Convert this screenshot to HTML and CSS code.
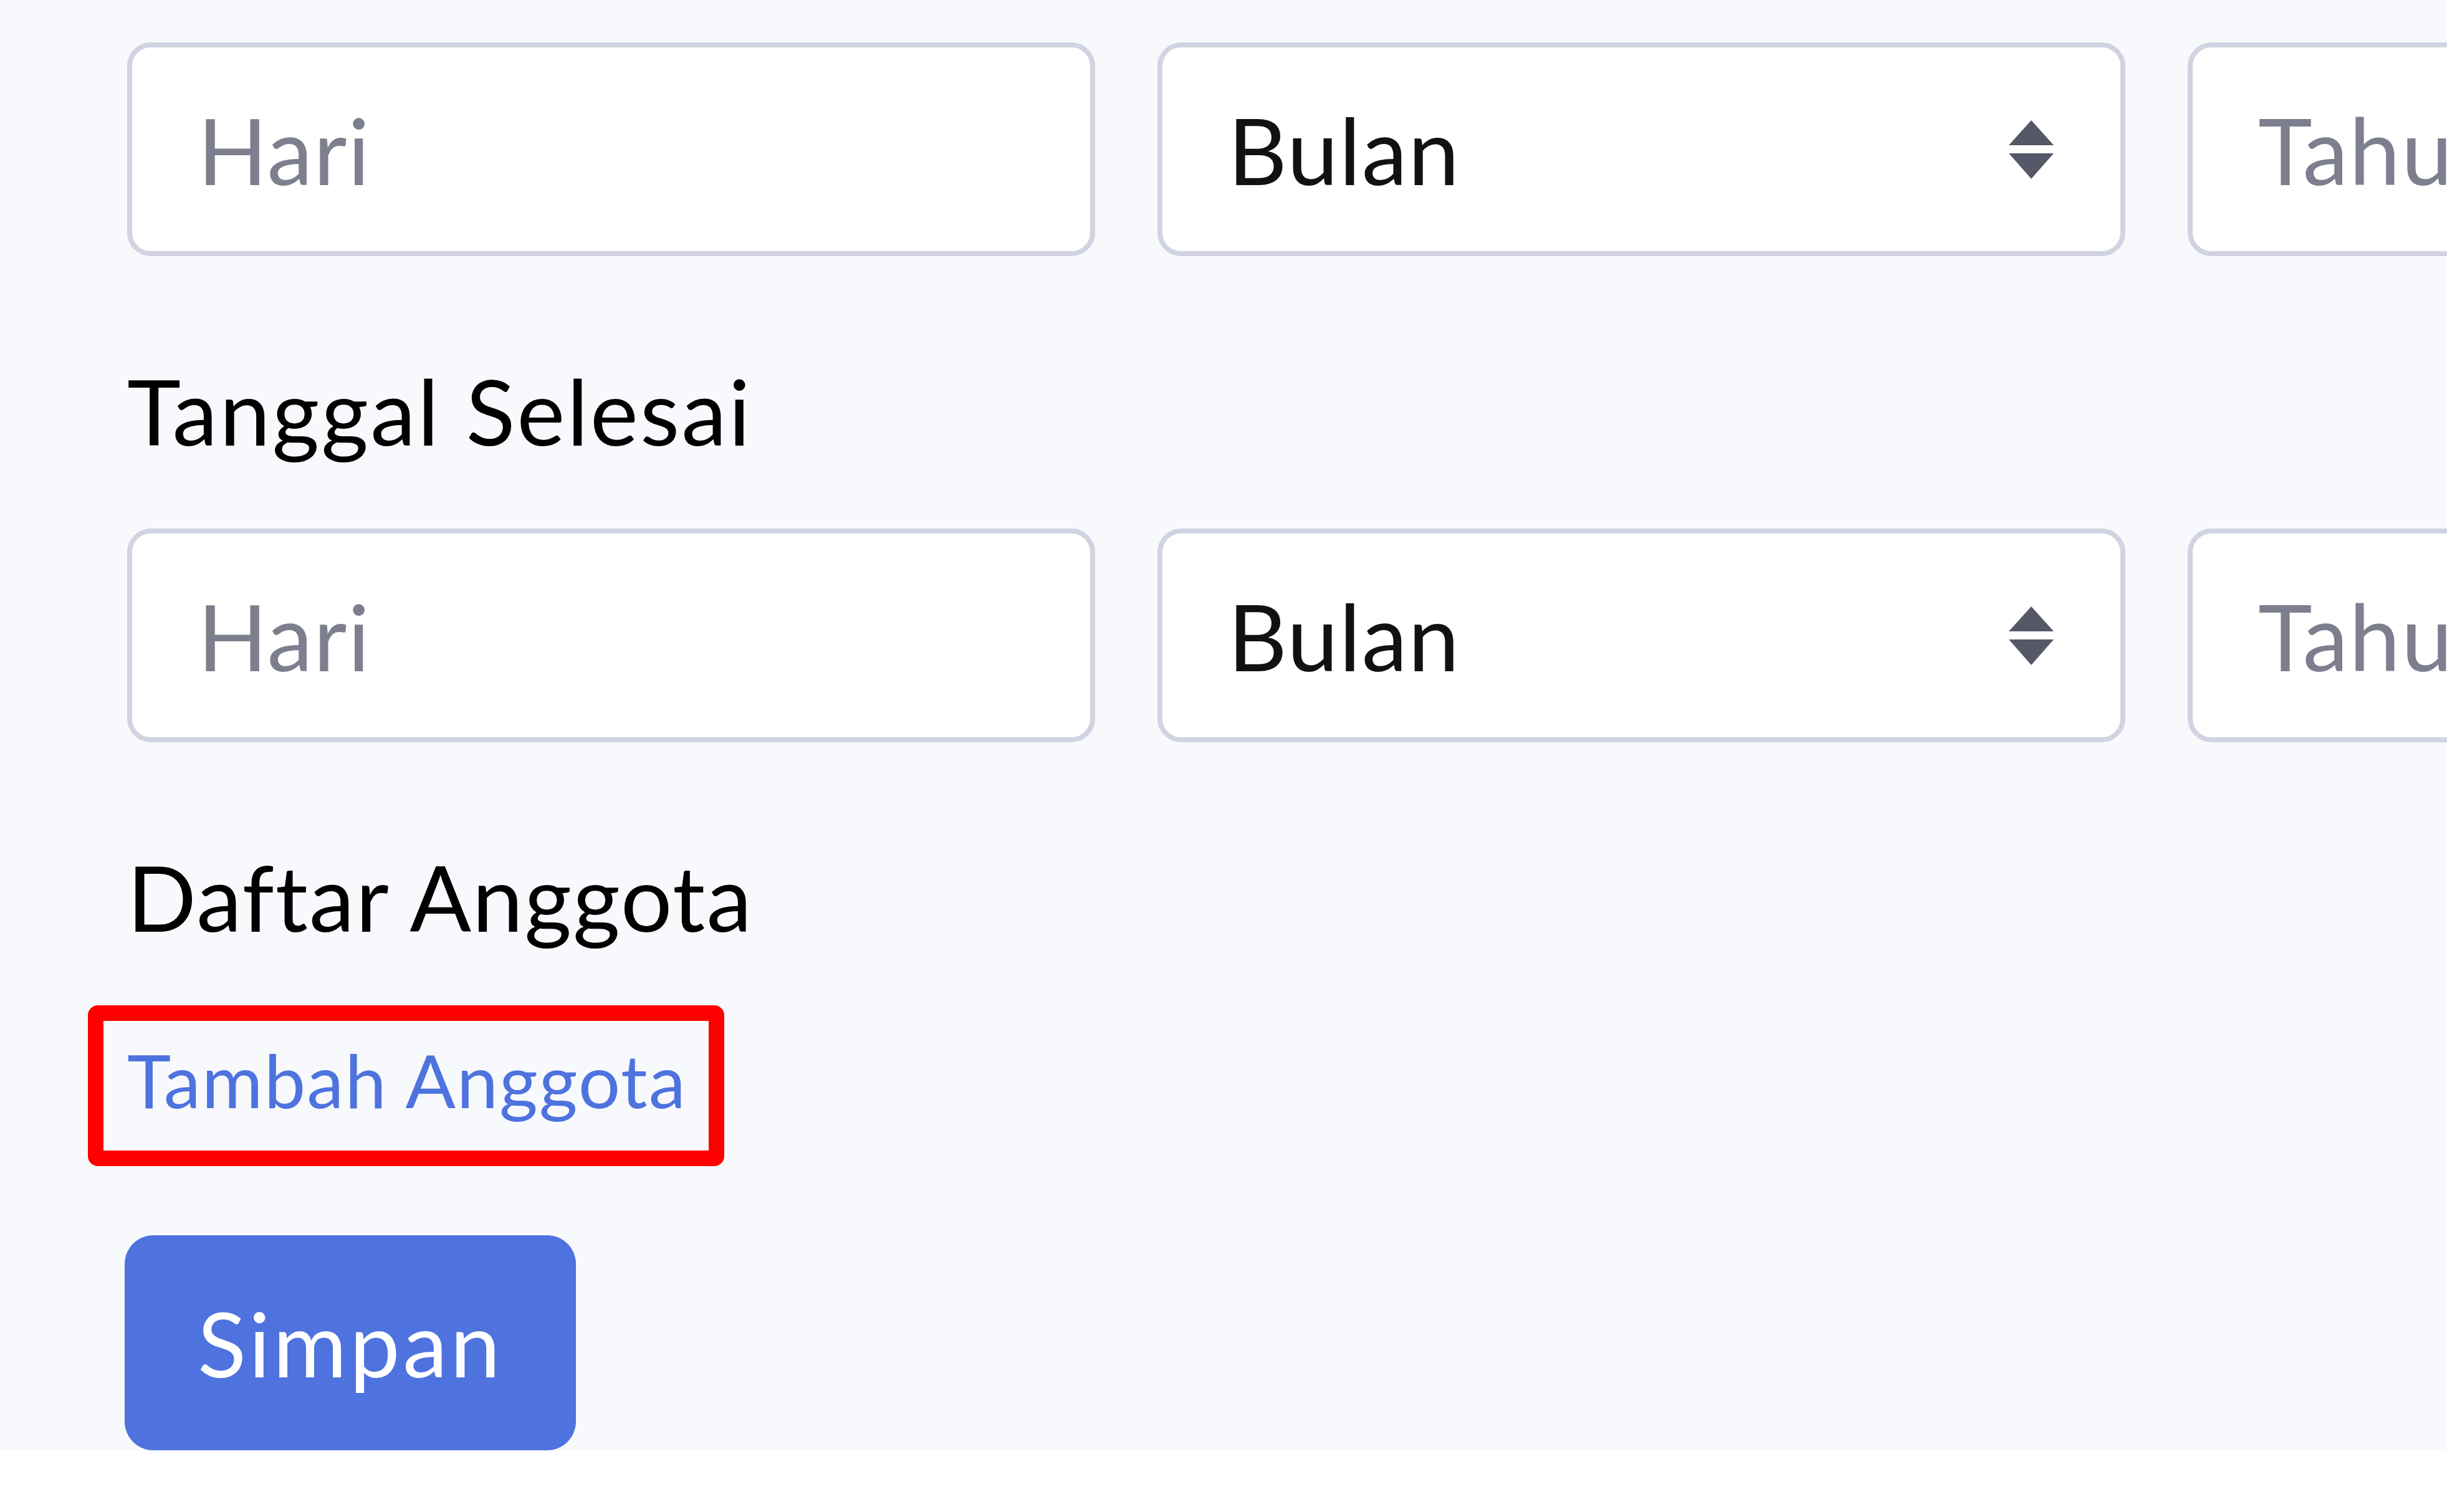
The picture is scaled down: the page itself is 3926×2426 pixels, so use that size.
FILE: index.html
```html
<!DOCTYPE html>
<html lang="id">
<head>
<meta charset="utf-8">
<title>Form Anggota</title>
<link rel="stylesheet" href="styles.css">
</head>
<body>
<main class="form-area">
  <div class="date-row">
    <input class="field" type="text" placeholder="Hari">
    <div class="select-box">
      <span class="select-value">Bulan</span>
      <svg class="select-arrows" viewBox="0 0 72 94" aria-hidden="true">
        <polygon points="0,40 36,0 72,40"/>
        <polygon points="0,53 72,53 36,94"/>
      </svg>
    </div>
    <input class="field" type="text" placeholder="Tahun">
  </div>

  <label class="field-label">Tanggal Selesai</label>

  <div class="date-row">
    <input class="field" type="text" placeholder="Hari">
    <div class="select-box">
      <span class="select-value">Bulan</span>
      <svg class="select-arrows" viewBox="0 0 72 94" aria-hidden="true">
        <polygon points="0,40 36,0 72,40"/>
        <polygon points="0,53 72,53 36,94"/>
      </svg>
    </div>
    <input class="field" type="text" placeholder="Tahun">
  </div>

  <div class="field-label field-label--section">Daftar Anggota</div>

  <div class="link-line">
    <a class="add-link" href="#">Tambah Anggota</a>
  </div>

  <button class="btn-save" type="button">Simpan</button>
</main>
</body>
</html>
```

FILE: styles.css
```css
html, body {
  margin: 0;
  padding: 0;
  overflow: hidden;
  background: #ffffff;
}

body {
  font-family: Lato, "Noto Sans", sans-serif;
  color: #000;
}

.form-area {
  background: #f8f9fc;
  padding: 68px 0 0 204px;
  display: flex;
  flex-direction: column;
  align-items: flex-start;
}

.date-row {
  display: flex;
  gap: 100px;
}

.field,
.select-box {
  flex: none;
  box-sizing: border-box;
  width: 1553px;
  height: 343px;
  border: 8px solid #d1d3e2;
  border-radius: 38px;
  background: #fff;
  padding: 0 107px 0 105px;
  font-family: Lato, "Noto Sans", sans-serif;
  font-size: 147px;
  letter-spacing: 1.5px;
  color: #111;
  outline: none;
}

.field::placeholder {
  color: #7d7f8e;
  opacity: 1;
}

.select-box {
  display: flex;
  align-items: center;
  justify-content: space-between;
}

.select-arrows {
  width: 72px;
  height: 94px;
  fill: #555866;
}

.field-label {
  display: block;
  font-size: 146px;
  line-height: 146px;
  letter-spacing: 3px;
  margin: 175px 0 116px;
  color: #000;
}

.field-label--section {
  letter-spacing: 2px;
}

.link-line {
  margin-top: 45px;
  font-size: 119px;
  line-height: 119px;
  letter-spacing: 2px;
}

.add-link {
  position: relative;
  display: inline-block;
  color: #4e73df;
  text-decoration: none;
}

.add-link::after {
  content: "";
  position: absolute;
  left: -63px;
  right: -60px;
  top: -60px;
  bottom: -79px;
  border: 25px solid #ff0000;
  border-radius: 16px;
}

.btn-save {
  margin: 190px 0 0 -4px;
  height: 345px;
  padding: 0 117px;
  border: none;
  border-radius: 46px;
  background: #4e73df;
  color: #fff;
  font-family: Lato, "Noto Sans", sans-serif;
  font-size: 144px;
  letter-spacing: 4.5px;
  line-height: 1;
}
```
